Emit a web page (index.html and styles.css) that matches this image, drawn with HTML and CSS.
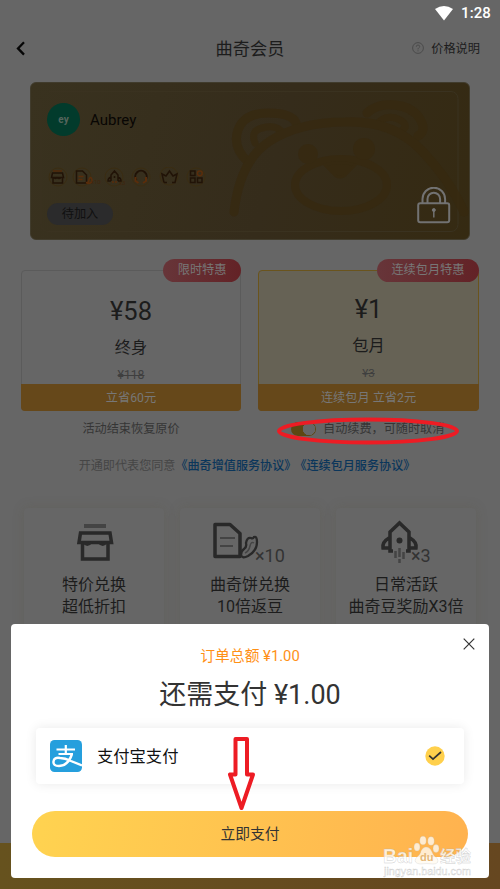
FILE: index.html
```html
<!DOCTYPE html>
<html lang="zh-CN">
<head>
<meta charset="utf-8">
<title>曲奇会员</title>
<link rel="stylesheet" href="styles.css">
</head>
<body>
<div class="screen">
  <div class="status">
    <svg class="wifi" width="18" height="15" viewBox="0 0 18 15"><path d="M0 3Q9-3 18 3L9 14.5Z" fill="#fff"/></svg>
    <span>1:28</span>
  </div>
  <header class="nav">
    <svg class="back" width="10" height="15" viewBox="0 0 10 15"><path d="M8 1.2 2 7.4 8 13.6" fill="none" stroke="#060606" stroke-width="2.3"/></svg>
    <h1>曲奇会员</h1>
    <div class="help">
      <svg width="12" height="12" viewBox="0 0 12 12" fill="none" stroke="#484848" stroke-width=".9"><circle cx="6" cy="6" r="5.4"/><path d="M4.3 4.8Q4.3 3 6 3t1.7 1.6Q7.700 5.300 6.800 5.900T6 7.400M6 8.300v1"/></svg>
      <span>价格说明</span>
    </div>
  </header>

  <section class="card">
    <svg class="bear" width="439" height="157" viewBox="0 0 439 157" fill="none" stroke="#37290f" stroke-linecap="round">
      <rect x="11" y="9.500" width="417" height="140" rx="7" stroke="#3a3220" stroke-width="1"/>
      <g class="face">
      <path d="M218 80Q202 65 208 48T238 31T266 41" stroke-width="9"/>
      <path d="M225 61Q220 49 232 46T250 48" stroke-width="7"/>
      <path d="M337 31Q347 21 365 23T390 37T388 54" stroke-width="9"/>
      <path d="M350 39Q360 32 370 38T371 49" stroke-width="7"/>
      <path d="M204 130Q210 78 240 59T315 40Q362 38 391 68T434 130" stroke-width="9"/>
      <ellipse cx="311" cy="103" rx="46" ry="26" stroke-width="8"/>
      <circle cx="278" cy="72" r="10" fill="#37290f" stroke="none"/>
      <circle cx="334" cy="67" r="11" fill="#37290f" stroke="none"/>
      <path d="M295 83Q310 78 325 83L314 94Q310 96 306 94Z" fill="#37290f" stroke-width="3"/>
      </g>
    </svg>
    <div class="user"><span class="avatar">ey</span><b>Aubrey</b></div>
    <div class="perks">
      <svg width="160" height="20" viewBox="0 0 160 20" fill="none" stroke="#211307" stroke-width="1.5">
        <g stroke="#3b2d12" stroke-width="1"><circle cx="11" cy="10" r="9"/><circle cx="35" cy="10" r="9"/><circle cx="67" cy="10" r="9"/><circle cx="94" cy="10" r="9"/><circle cx="122" cy="9" r="9"/><circle cx="149" cy="10" r="9"/></g>
        <path d="M6 4h9" stroke="#50290a"/><path d="M5.500 6h10l1 4.500H4.500ZM6 10.500v5.500h9.500v-5.500M7 10.500q1 2 3 0q2 2 4 0"/>
        <path d="M29.500 4h6l4 4v8h-10Z"/><path d="M31.500 9.500h5m-5 3h4M39 15.500q3 .5 3-3q1.500-4 3 0q0 4-4 4Z" stroke="#5a2d0b"/>
        <path d="M64 14V8l3.500-4L71 8v6M64 10q-3 1-3 4h3m7-4q3 1 3 4h-3M67.500 9v2"/><path d="M66 14v2m3-2v2" stroke="#5a2d0b"/>
        <path d="M89.500 13a5.700 5.700 0 1 1 9 0" stroke-width="2"/><path d="M88.500 10v4l3 2m7.500-6v4l-3 2" stroke="#5a2d0b" stroke-width="2"/>
        <path d="M117 15.500 115 7l4 2 3.500-5 3.500 5 4-2-2 8.500h-3m-5 0h-3"/>
        <path d="M143.500 4h4.500v4.500h-4.500zM143.500 11h4.500v4.500h-4.500zM150.500 11h4.500v4.500h-4.500z"/><circle cx="152.800" cy="6.300" r="2.400" stroke="#5a2d0b"/>
        <text x="44" y="17" class="mini">x10</text><text x="72" y="18" class="mini">x3</text>
      </svg>
    </div>
    <span class="join">待加入</span>
    <svg class="lock" width="34" height="37" viewBox="0 0 34 37" fill="none" stroke="#727272" stroke-width="2"><rect x="1.200" y="16.200" width="31" height="19" rx="2"/><path d="M5.500 16v-4a11.300 11.300 0 0 1 22.600 0v4M10.500 16v-4a6.300 6.300 0 0 1 12.600 0v4"/><circle cx="16.800" cy="23" r="1.500" fill="#777" stroke-width="1"/><path d="M16.800 24v6.500" stroke-width="1.500"/></svg>
  </section>

  <section class="plans">
    <div class="plan life">
      <span class="tag">限时特惠</span>
      <strong>¥58</strong><h2>终身</h2><s>¥118</s>
      <div class="save">立省60元</div>
    </div>
    <div class="plan month">
      <span class="tag">连续包月特惠</span>
      <strong>¥1</strong><h2>包月</h2><s>¥3</s>
      <div class="save">连续包月 立省2元</div>
    </div>
  </section>
  <div class="captions">
    <p>活动结束恢复原价</p>
    <p class="auto"><i class="switch"></i><span>自动续费，可随时取消</span>
      <svg class="ring" width="184" height="30" viewBox="0 0 184 30"><ellipse cx="92" cy="15" rx="89" ry="11.500" fill="none" stroke="#ed1c24" stroke-width="4"/></svg>
    </p>
  </div>
  <p class="terms"><span>开通即代表您同意</span><b>《曲奇增值服务协议》</b><b>《连续包月服务协议》</b></p>

  <section class="features">
    <div class="feature">
      <svg width="140" height="50" viewBox="0 0 140 50" fill="none" stroke="#292929" stroke-width="3.500"><path d="M60 18h22" stroke="#444" stroke-width="4"/><path d="M56.500 25h29.500l1.500 9.500H55ZM58.500 35v16h25.500V35"/><path d="M60 34q3 5 7 0m8 0q4 5 7 0" stroke-width="3"/></svg>
      <p>特价兑换</p><p>超低折扣</p>
    </div>
    <div class="feature">
      <svg width="140" height="50" viewBox="0 0 140 50" fill="none" stroke="#292929" stroke-width="3.500"><path d="M35 16.500h15l10 9v23H35Z" stroke-linejoin="round"/><path d="M40 30h15m-15 8h13" stroke="#444" stroke-width="2"/><path d="M61 47q0-4 3-6t2-6q1-6 5-5 2 1 3-1 3-1 3 5 0 9-9 14-6 3-7-1Z" stroke-width="2.300"/><path d="M65 45q4-2 5-7t4-3" stroke="#444" stroke-width="1.500"/></svg>
      <span class="times ten">×10</span>
      <p>曲奇饼兑换</p><p>10倍返豆</p>
    </div>
    <div class="feature">
      <svg width="140" height="50" viewBox="0 0 140 50" fill="none" stroke="#292929" stroke-width="3.500"><path d="M57 43h-3V24l9.500-9 9.500 9v19h-3M53 30q-7 4-6 10h7m20-10q7 4 6 10h-7"/><circle cx="63.500" cy="32.500" r="3" fill="#292929" stroke="none"/><path d="M59.500 43v7m4-10v9m0 2v4m4-11v7" stroke="#444" stroke-width="2.500"/></svg>
      <span class="times three">×3</span>
      <p>日常活跃</p><p>曲奇豆奖励X3倍</p>
    </div>
  </section>
  <footer class="bottom"></footer>

  <div class="sheet">
    <svg class="close" width="12" height="12" viewBox="0 0 12 12"><path d="M.7.7 11.300 11.300M11.300.7.7 11.300" stroke="#333" stroke-width="1.200"/></svg>
    <p class="total">订单总额 ¥1.00</p>
    <p class="due">还需支付 ¥1.00</p>
    <div class="method">
      <svg width="32" height="32" viewBox="0 0 32 32" fill="none" stroke="#fff"><rect width="32" height="32" rx="4.500" fill="#259fdd" stroke="none"/><path d="M6.500 9.500h18.500M15.800 5v9M8.500 14h14.500" stroke-width="2.200"/><path d="M22 14Q18 26 9 26 3 26 3.500 21.500T10 18Q15 18 21 21L32 25.500" stroke-width="2.400"/></svg>
      <span>支付宝支付</span>
      <svg class="check" width="20" height="20" viewBox="0 0 20 20"><circle cx="10" cy="10" r="9.700" fill="#ffd04c"/><path d="M4.200 9.700 8 13.200 16 6" fill="none" stroke="#333" stroke-width="1.700"/></svg>
    </div>
    <button class="pay">立即支付</button>
  </div>
  <svg class="arrow" width="29" height="78" viewBox="0 0 29 78"><path d="M8.500 3H20V38.500H26L14.500 72 3 38.500H8.500Z" fill="#fff" stroke="#ed1c24" stroke-width="4" stroke-linejoin="round"/></svg>
  <div class="mark">
    <svg width="90" height="46" viewBox="0 0 90 46">
      <g class="word"><text x="0" y="28" font-size="20.500" textLength="30" lengthAdjust="spacingAndGlyphs">Bai</text><text x="57" y="27" font-size="15.500">经验</text><text x="1" y="40" font-size="10" textLength="87" lengthAdjust="spacingAndGlyphs" class="site">jingyan.baidu.com</text></g>
      <g fill="#fffaf0" fill-opacity=".8" stroke="#bbb" stroke-opacity=".5" stroke-width=".5"><ellipse cx="34" cy="12" rx="3" ry="4"/><ellipse cx="40" cy="5.500" rx="3.200" ry="4.300"/><ellipse cx="48" cy="6" rx="3.200" ry="4.300"/><ellipse cx="53" cy="13.500" rx="3" ry="4"/><path d="M43 12q4 0 6 5t5 6q3 6-4 6-6-1-13 0-7-1-4-6 5-4 5-7 2-4 5-4Z"/></g>
      <text x="37" y="26" font-size="11" class="du">du</text>
    </svg>
  </div>
</div>
</body>
</html>
```
FILE: styles.css
```css
* { box-sizing: border-box; }
body { margin: 0; font-family: Roboto, "Noto Sans CJK SC", sans-serif; color: #1c1c1c; }
h1, h2, p { margin: 0; font-weight: 400; }
svg { display: block; }
.screen { position: relative; display: flex; flex-direction: column; width: 500px; height: 889px; background: #666; overflow: hidden; }
.status { height: 26px; flex: none; display: flex; align-items: center; justify-content: flex-end; gap: 8px; padding-right: 9px; color: #fff; font-size: 15px; font-weight: 500; letter-spacing: .1px; }
.nav { height: 44px; flex: none; display: grid; grid-template-columns: 1fr auto 1fr; align-items: center; padding: 0 20px 0 16px; }
.nav h1 { font-size: 17.200px; padding: 0 0 2px 4px; }
.help { display: flex; justify-content: flex-end; align-items: center; gap: 7px; font-size: 12.200px; }
.card { position: relative; height: 158px; flex: none; margin: 12px 30px 0; border-radius: 6px; background: linear-gradient(105deg, #39321f 0%, #352c1b 55%, #352a12 100%); border: 1px solid #403b2c; padding: 20px 16px; }
.bear { position: absolute; inset: -1px; }
.face { opacity: .7; }
.user { position: relative; display: flex; align-items: center; gap: 10px; color: #080604; font-size: 15px; }
.user b { font-weight: 400; }
.avatar { width: 33px; height: 33px; border-radius: 50%; background: #023b2c; color: #55655c; font: bold 10px/33px Roboto, sans-serif; text-align: center; }
.perks { position: relative; margin: 31px 0 0 0; height: 20px; }
.mini { fill: #40250d; stroke: none; font-size: 6px; }
.join { position: relative; display: block; width: 66px; height: 22px; margin-top: 16px; border-radius: 11px; background: #2b2b2c; color: #101010; font-size: 12.200px; line-height: 22px; text-align: center; }
.lock { position: absolute; right: 18px; bottom: 15px; }
.plans { display: grid; grid-template-columns: 220px 221px; gap: 17px; margin: 30px 21px 0; flex: none; }
.plan { position: relative; display: flex; flex-direction: column; align-items: center; height: 141px; border: 1px solid #5b5b5b; border-radius: 4px; }
.month { background: #666255; border-color: #6a541d; }
.plan strong { font-size: 25.500px; font-weight: 400; line-height: 30px; margin-top: 25px; }
.plan h2 { font-size: 16.200px; line-height: 24px; margin-top: 10px; }
.plan s { color: #3f3f3f; font-size: 12.200px; line-height: 16px; margin-top: 7px; }
.month strong { margin-top: 23px; }
.month s { font-size: 11.500px; }
.save { position: relative; width: calc(100% + 2px); height: 27px; margin: auto -1px -1px; border-radius: 0 0 4px 4px; background: #66481a; color: #777; font-size: 12.200px; line-height: 28px; text-align: center; }
.tag { position: absolute; right: -1px; top: -12px; height: 23px; padding: 0 14.500px; border-radius: 12px; background: linear-gradient(90deg, #673539, #632226); color: #777; font-size: 12.200px; line-height: 23px; }
.captions { display: grid; grid-template-columns: 220px 221px; gap: 17px; margin: 8px 21px 0; height: 20px; flex: none; color: #353535; font-size: 12.150px; line-height: 20px; text-align: center; }
.auto { position: relative; display: flex; align-items: center; padding-left: 33px; gap: 7px; }
.switch { width: 25px; height: 14px; border-radius: 7px; background: radial-gradient(circle at 18px 7px, #666 6px, #5d4712 6.500px); }
.ring { position: absolute; left: 18px; top: -3px; }
.terms { flex: none; margin-top: 17px; height: 21px; display: flex; justify-content: center; color: #454545; font-size: 12.100px; line-height: 20px; padding-right: 6px; }
.terms b { color: #0b365b; font-weight: 500; }
.terms b + b { margin-left: -2px; }
.features { flex: none; display: grid; grid-template-columns: repeat(3, 140px); gap: 16px; margin: 31px 24px 0; height: 150px; }
.feature { position: relative; border-radius: 4px; background: #666; box-shadow: 0 0 12px rgba(85, 80, 60, .22); font-size: 16px; line-height: 22px; text-align: center; white-space: nowrap; }
.feature > svg { height: 66px; overflow: visible; margin-top: -8px; margin-bottom: 8px; }
.times { position: absolute; top: 37px; color: #333; font-size: 18px; line-height: 22px; }
.ten { left: 75px; }
.three { left: 75px; }
.bottom { margin-top: auto; height: 46px; flex: none; background: linear-gradient(90deg, #66521e, #664720); }
.sheet { position: absolute; left: 11px; top: 624px; width: 478px; height: 254px; border-radius: 4px; background: #fff; padding: 21px 21px 20px; text-align: center; }
.close { position: absolute; right: 14px; top: 14px; }
.total { color: #ff9016; font-size: 14.800px; line-height: 22px; }
.due { color: #333; font-size: 27px; line-height: 36px; margin-top: 10px; }
.method { display: flex; align-items: center; gap: 15px; height: 56px; margin: 15px 4px 0; padding: 0 19px 0 14px; border-radius: 4px; box-shadow: 0 0 12px rgba(0, 0, 0, .09); color: #111; font-size: 16.300px; }
.method span { padding-bottom: 2px; }
.check { margin-left: auto; }
.pay { display: block; width: 436px; height: 46px; margin-top: 27px; border: 0; border-radius: 23px; background: linear-gradient(100deg, #ffd350, #ffb24f); color: #333; font: 14.800px/46px Roboto, "Noto Sans CJK SC", sans-serif; padding: 0; }
.arrow { position: absolute; left: 227px; top: 736px; }
.mark { position: absolute; left: 383px; top: 835px; }
.word { fill: #fff; fill-opacity: .8; stroke: #aaa; stroke-opacity: .6; stroke-width: .4px; font-family: "Liberation Sans", "Noto Sans CJK SC", sans-serif; font-weight: 700; }
.site { font-weight: 400; }
.du { fill: #e5b878; font-family: "Liberation Sans", sans-serif; font-weight: 700; }
```
